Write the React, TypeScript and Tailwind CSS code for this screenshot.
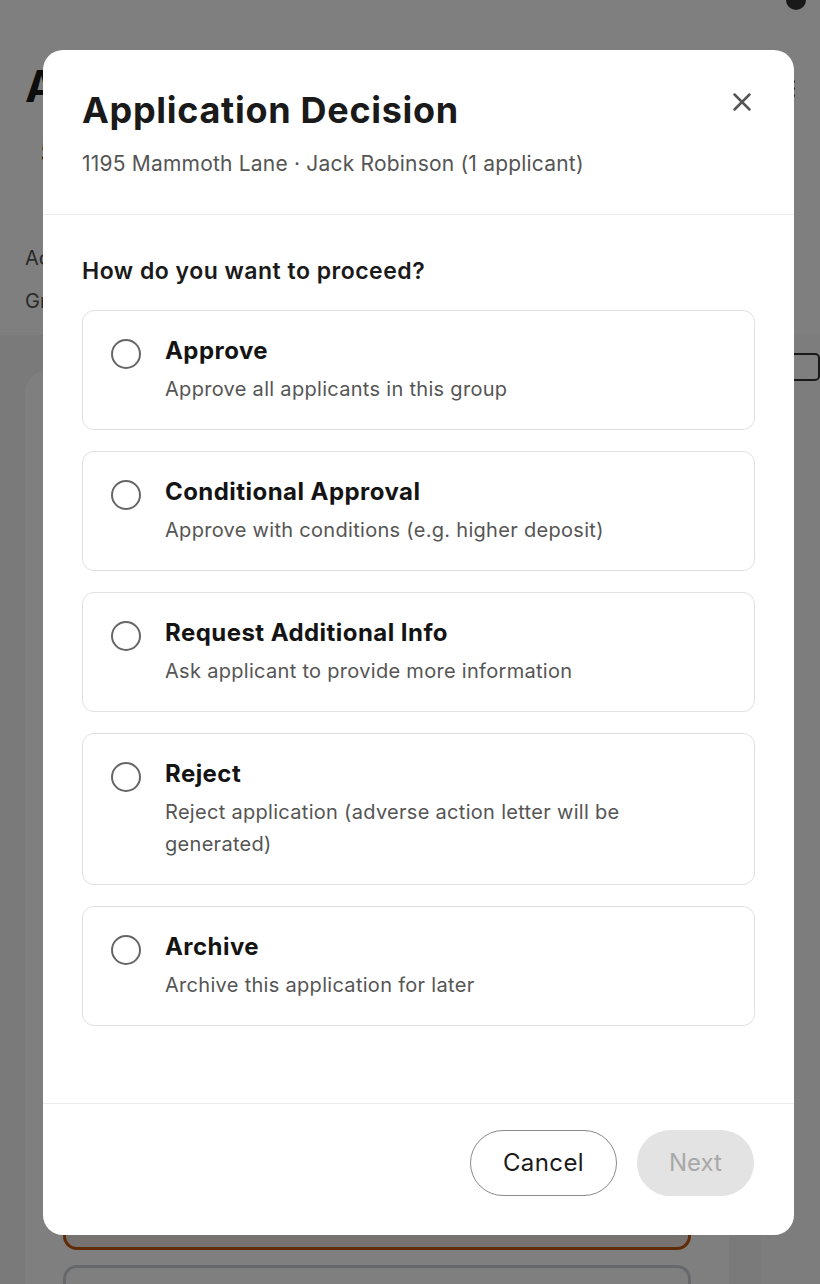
import { X } from 'lucide-react';

interface DecisionOption {
  id: string;
  title: string;
  description: string;
}

const options: DecisionOption[] = [
  { id: 'approve', title: 'Approve', description: 'Approve all applicants in this group' },
  { id: 'conditional', title: 'Conditional Approval', description: 'Approve with conditions (e.g. higher deposit)' },
  { id: 'info', title: 'Request Additional Info', description: 'Ask applicant to provide more information' },
  { id: 'reject', title: 'Reject', description: 'Reject application (adverse action letter will be generated)' },
  { id: 'archive', title: 'Archive', description: 'Archive this application for later' },
];

function BackgroundPage() {
  return (
    <div className="flex flex-col h-full">
      {/* page header */}
      <div className="bg-white h-[335px] flex shrink-0">
        <div className="flex-1 pl-[25px] pt-[62px]">
          <div className="text-[44px] leading-[48px] font-bold text-[#1a1a1a]">Applications</div>
          <div className="mt-[18px] ml-[14px] text-[38px] leading-[44px] text-[#222]">5 groups</div>
          <div className="mt-[72px] text-[20px] leading-[28px] text-[#555]">Active applications</div>
          <div className="mt-[15px] text-[20px] leading-[28px] text-[#555]">Grouped by property</div>
        </div>
        <div className="w-[50px] relative">
          <div className="absolute -top-[10px] left-[16px] w-[20px] h-[20px] rounded-full bg-[#333]" />
          <div className="absolute top-[80px] left-[22px] flex flex-col gap-[4px]">
            <span className="w-[3px] h-[3px] rounded-full bg-[#444]" />
            <span className="w-[3px] h-[3px] rounded-full bg-[#444]" />
            <span className="w-[3px] h-[3px] rounded-full bg-[#444]" />
          </div>
        </div>
      </div>
      {/* page body */}
      <div className="flex-1 bg-[#f4f4f4] flex gap-[32px] pl-[25px]">
        <div className="mt-[35px] w-[712px] bg-white rounded-t-[24px] px-[38px] pt-[40px] flex flex-col justify-end gap-[15px]">
          <div className="h-[200px] rounded-[14px] border-[3px] border-[#c2560f] bg-[#efe6e0]" />
          <div className="h-[19px] rounded-t-[14px] border-[3px] border-b-0 border-[#cfd0d6]" />
        </div>
        <div className="flex-1 bg-[#fafafa] pt-[18px] pl-[29px]">
          <div className="w-[30px] h-[28px] rounded-[5px] border-[2px] border-[#333] bg-white" />
        </div>
      </div>
    </div>
  );
}

function RadioCircle() {
  return <span className="mt-[4px] w-[30px] h-[30px] shrink-0 rounded-full border-[2.5px] border-[#666] bg-white" />;
}

export default function App() {
  return (
    <div className="relative h-[1284px] overflow-hidden bg-white font-['Inter',sans-serif]">
      <BackgroundPage />

      {/* modal overlay */}
      <div className="absolute inset-0 bg-black/50 flex items-start pt-[50px] pl-[43px]">
        <div className="w-[751px] h-[1185px] bg-white rounded-[20px] flex flex-col overflow-hidden">
          {/* header */}
          <div className="relative px-[39px] pt-[40px] pb-[36px] border-b border-[#ececec]">
            <h2 className="text-[36px] leading-[40px] font-bold text-[#1a1a1a] tracking-[0.7px]">Application Decision</h2>
            <p className="mt-[20px] text-[21px] leading-[28px] text-[#555] tracking-[0.2px]">
              1195 Mammoth Lane · Jack Robinson (1 applicant)
            </p>
            <button className="absolute top-[36px] right-[36px] w-[32px] h-[32px] flex items-center justify-center text-[#555]">
              <X size={30} strokeWidth={2} />
            </button>
          </div>

          {/* body */}
          <div className="flex-1 px-[39px] pt-[41px]">
            <h3 className="text-[23px] leading-[30px] font-semibold text-[#1a1a1a] tracking-[0.5px]">How do you want to proceed?</h3>
            <div className="mt-[24px] flex flex-col gap-[21px]">
              {options.map((opt) => (
                <label
                  key={opt.id}
                  className="flex items-start gap-[24px] border border-[#e0e0e0] rounded-[12px] pl-[28px] pr-[32px] py-[24px] cursor-pointer"
                >
                  <RadioCircle />
                  <div className="flex flex-col">
                    <span className="text-[24px] leading-[32px] font-bold text-[#141414] tracking-[0.45px]">{opt.title}</span>
                    <span className="mt-[6px] text-[20px] leading-[32px] text-[#555] tracking-[0.3px]">{opt.description}</span>
                  </div>
                </label>
              ))}
            </div>
          </div>

          {/* footer */}
          <div className="border-t border-[#ececec] pt-[26px] pb-[39px] pr-[40px] flex justify-end gap-[20px]">
            <button className="w-[147px] h-[66px] rounded-full border border-[#8a8a8a] text-[24px] text-[#1a1a1a] bg-white tracking-[0.4px]">
              Cancel
            </button>
            <button disabled className="w-[117px] h-[66px] rounded-full bg-[#e3e3e3] text-[24px] text-[#a8a8a8]">
              Next
            </button>
          </div>
        </div>
      </div>
    </div>
  );
}
